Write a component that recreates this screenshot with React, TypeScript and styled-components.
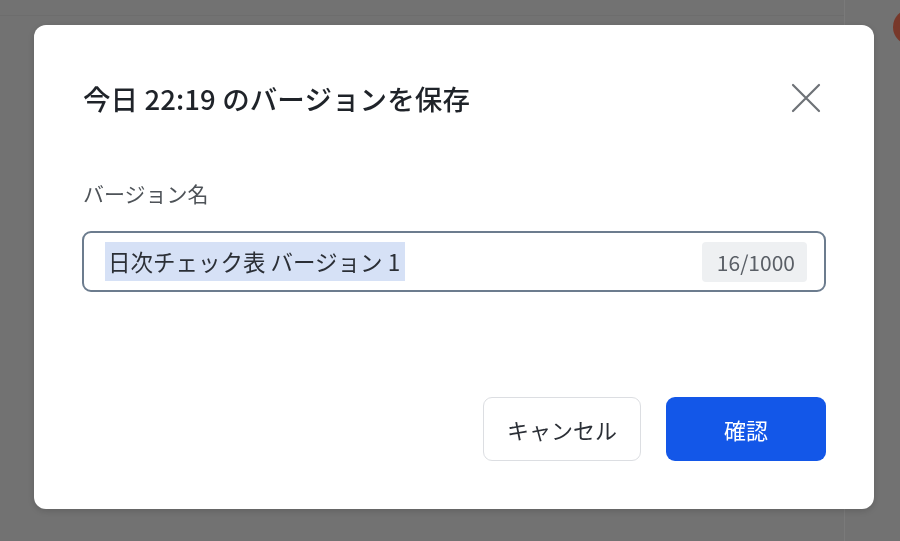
import styled, { createGlobalStyle } from 'styled-components';

const GlobalStyle = createGlobalStyle`
  html, body {
    margin: 0;
    padding: 0;
    background: #727272;
    font-family: "Noto Sans CJK JP", "Noto Sans", sans-serif;
  }
`;

// page that sits dimmed behind the dialog
const Page = styled.div`
  width: 900px;
  height: 541px;
  display: flex;
  overflow: hidden;
  background: #727272;
`;

const MainArea = styled.div`
  flex: 1;
  border-top: 1px solid #6d6d6d;
  margin-top: 15px;
`;

const SideBar = styled.div`
  width: 56px;
  border-left: 1px solid #7a7a7a;
  display: flex;
  justify-content: flex-end;
  padding-top: 9px;
  box-sizing: border-box;
`;

const Avatar = styled.div`
  width: 36px;
  height: 36px;
  flex-shrink: 0;
  border-radius: 50%;
  background: #78382a;
  margin-right: -29px;
`;

const Overlay = styled.div`
  position: fixed;
  inset: 0;
  padding: 25px 26px 32px 34px;
  box-sizing: border-box;
  display: flex;
`;

const Dialog = styled.div`
  flex: 1;
  background: #ffffff;
  border-radius: 12px;
  box-shadow: 0 2px 6px rgba(0, 0, 0, 0.15);
  padding: 0 48px 48px;
  display: flex;
  flex-direction: column;
`;

const Header = styled.div`
  margin-top: 48px;
  height: 50px;
  display: flex;
  align-items: center;
  justify-content: space-between;
  padding-left: 1px;
`;

const Title = styled.h2`
  margin: 0;
  font-size: 27.5px;
  font-weight: 500;
  color: #1f2329;
  letter-spacing: 0.1px;
`;

const CloseButton = styled.button`
  border: none;
  background: none;
  padding: 0;
  margin-right: 4px;
  width: 32px;
  height: 32px;
  display: flex;
  align-items: center;
  justify-content: center;
  cursor: pointer;
`;

const Label = styled.label`
  margin-top: 55px;
  font-size: 21px;
  line-height: 30px;
  color: #4e5358;
  padding-left: 1px;
`;

const InputBox = styled.div`
  margin-top: 23px;
  height: 61px;
  box-sizing: border-box;
  border: 2px solid #6c7c8e;
  border-radius: 9px;
  display: flex;
  align-items: center;
  justify-content: space-between;
  padding: 0 17px 0 21px;
`;

const Selected = styled.span`
  background: #d6e1f6;
  color: #2b2f36;
  font-size: 22.5px;
  line-height: 39px;
  padding: 0 5px 0 3px;
`;

const Counter = styled.span`
  background: #eef0f2;
  color: #5a5f66;
  font-size: 21px;
  line-height: 40px;
  padding: 0 12px 0 15px;
  border-radius: 4px;
`;

const Footer = styled.div`
  margin-top: auto;
  display: flex;
  justify-content: flex-end;
  gap: 25px;
`;

const Button = styled.button<{ primary?: boolean }>`
  height: 64px;
  width: ${p => (p.primary ? '160px' : '158px')};
  border-radius: 9px;
  font-family: inherit;
  font-size: 22px;
  cursor: pointer;
  border: ${p => (p.primary ? 'none' : '1.5px solid #dcdee2')};
  background: ${p => (p.primary ? '#1357e8' : '#ffffff')};
  color: ${p => (p.primary ? '#ffffff' : '#2b2f36')};
`;

export default function App() {
  return (
    <>
      <GlobalStyle />
      <Page>
        <MainArea />
        <SideBar>
          <Avatar />
        </SideBar>
      </Page>
      <Overlay>
        <Dialog>
          <Header>
            <Title>今日 22:19 のバージョンを保存</Title>
            <CloseButton aria-label="閉じる">
              <svg width="30" height="30" viewBox="0 0 30 30" fill="none">
                <path d="M2 2 L28 28 M28 2 L2 28" stroke="#6e7277" strokeWidth="2.2" strokeLinecap="round" />
              </svg>
            </CloseButton>
          </Header>
          <Label>バージョン名</Label>
          <InputBox>
            <Selected>日次チェック表 バージョン 1</Selected>
            <Counter>16/1000</Counter>
          </InputBox>
          <Footer>
            <Button>キャンセル</Button>
            <Button primary>確認</Button>
          </Footer>
        </Dialog>
      </Overlay>
    </>
  );
}
